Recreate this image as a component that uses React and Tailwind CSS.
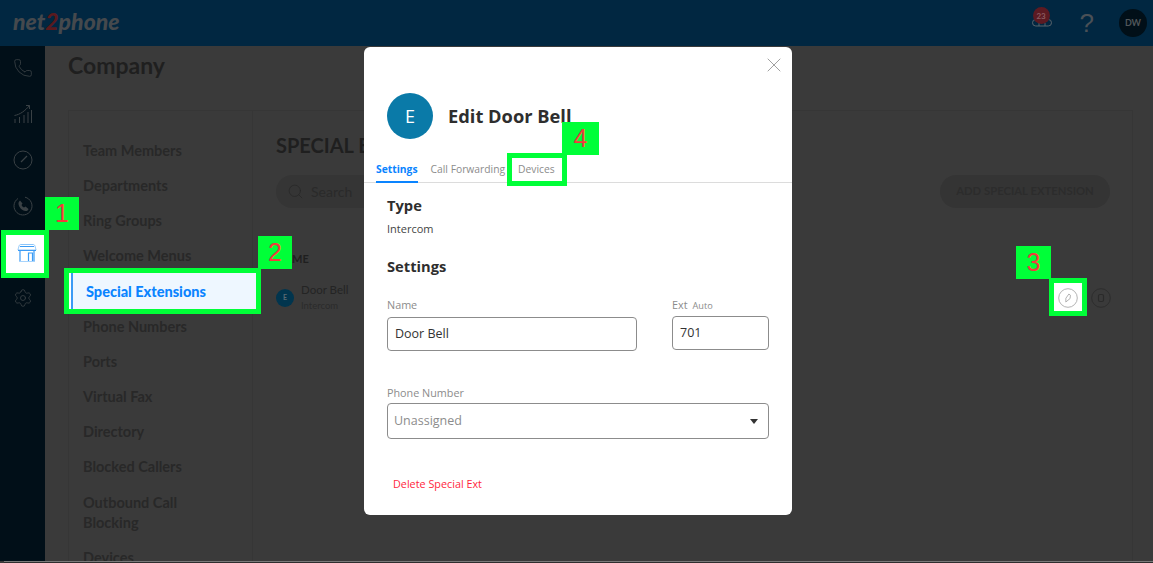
import React from 'react';
import { Phone, Settings, Search, X } from 'lucide-react';

const navItems = ['Team Members', 'Departments', 'Ring Groups', 'Welcome Menus'];
const navItemsBelow = ['Phone Numbers', 'Ports', 'Virtual Fax', 'Directory', 'Blocked Callers'];

const GrowthIcon = () => (
  <svg width="20" height="20" viewBox="0 0 20 20" fill="none" stroke="#3a4145" strokeWidth="1">
    <path d="M2 19v-4M6.500 19v-6M11 19v-8M15 19V8M18.500 19V6" />
    <path d="M1.500 11.500C7 10.500 12 7 16.500 1.500M13 1.500h3.500V5" />
  </svg>
);

const GaugeIcon = () => (
  <svg width="20" height="20" viewBox="0 0 20 20" fill="none" stroke="#3a4145" strokeWidth="1">
    <circle cx="10" cy="10" r="9" />
    <path d="M8 12l6-6" strokeWidth="1.300" />
  </svg>
);

const CallCircleIcon = () => (
  <svg width="20" height="20" viewBox="0 0 20 20" fill="none" stroke="#3a4145" strokeWidth="1">
    <path d="M5 2.500A9 9 0 1 0 12 1.200" />
    <path d="M7 4.500l2.500 3-1 1.500c.5 1.300 1.200 2 2.500 2.500l1.500-1 3 2.500c-.5 1.500-1.500 2.200-3 2-3.500-.5-6.500-3.500-7-7-.1-1.500.5-2.700 1.500-3.500z" fill="#3a4145" stroke="none" />
  </svg>
);

const StoreIcon = () => (
  <svg width="20" height="20" viewBox="0 0 20 20" fill="none" stroke="#3b9bf5" strokeWidth="1">
    <path d="M3.500 1.500h13c1 0 1.500 1 2.500 5.500H1c1-4.500 1.500-5.500 2.500-5.500z" stroke="#8cc6fb" />
    <path d="M1 7.500h18M3 3.500h14" />
    <path d="M3 8v10M17 8v10" strokeWidth="1.200" />
    <path d="M2 18.500h16" stroke="#a8d4fc" />
    <path d="M11.500 18V10h4v8" strokeWidth="1.200" />
  </svg>
);

const PencilCircle = () => (
  <svg width="20" height="20" viewBox="0 0 20 20" fill="none" stroke="#a0a0a0" strokeWidth="0.8">
    <circle cx="10" cy="10" r="9.300" />
    <path d="M7.800 14l.1-3.800 3-4.200 1.500 1.200-.3 3.300z" />
  </svg>
);

const TrashCircle = () => (
  <svg width="20" height="20" viewBox="0 0 20 20" fill="none" stroke="#2a2a2a" strokeWidth="0.8">
    <circle cx="10" cy="10" r="9.300" />
    <rect x="7.500" y="6.500" width="5" height="7" rx="1.500" strokeWidth="1.200" />
  </svg>
);

// Red number on a green square, placed next to each marked item
const Badge = ({ className, children }) => (
  <div className={`absolute flex items-center justify-center bg-[#00ff38] text-[#f23b3b] text-[25px] leading-none font-['Liberation_Sans',sans-serif] ${className}`}>
    {children}
  </div>
);

export default function App() {
  return (
    <div className="relative flex h-[563px] w-[1153px] flex-col overflow-hidden bg-[#3a3a3a] font-['Lato',sans-serif]">
      <header className="flex h-[46px] shrink-0 items-center justify-between bg-[#012741] pl-[13px] pr-[6px]">
        <span className="pb-[3px] text-[23px] font-black italic leading-none text-[#45494d]">
          net<span className="text-[#5a1a1e]">2</span>phone
        </span>
        <div className="flex items-center">
          <div className="relative mr-[28px] h-[22px] w-[20px]">
            <div className="absolute left-[1px] top-[-5px] z-10 flex h-[17px] w-[17px] items-center justify-center rounded-full bg-[#5c1a22] text-[8px] font-bold text-[#8a5a60]">23</div>
            <svg width="20" height="9" viewBox="0 0 20 9" fill="none" stroke="#59646c" strokeWidth="1" className="absolute bottom-[7px] left-0">
              <rect x="0.500" y="1.500" width="19" height="6.500" rx="3.250" />
              <path d="M7 8V5M13 8V5" />
            </svg>
          </div>
          <span className="mr-[25px] font-['Liberation_Sans',sans-serif] text-[26px] font-light leading-none text-[#4a5056]">?</span>
          <div className="flex h-[28px] w-[28px] items-center justify-center rounded-full bg-[#010f18] text-[9px] font-bold text-[#50565a]">DW</div>
        </div>
      </header>

      <div className="flex min-h-0 flex-1 overflow-hidden">
        <aside className="flex w-[45px] shrink-0 flex-col items-start gap-[26px] bg-[#010f18] pl-[13px] pt-[12px]">
          <Phone size={20} strokeWidth={1} className="text-[#3a4145]" />
          <GrowthIcon />
          <GaugeIcon />
          <CallCircleIcon />
          <div className="relative h-5 w-5">
            <div className="absolute left-[-12px] top-[-12px] flex h-[48px] w-[48px] items-center justify-center border-[5px] border-[#00ff38] bg-white pb-[3px] pl-[3px]">
              <StoreIcon />
            </div>
          </div>
          <Settings size={20} strokeWidth={1} className="text-[#3a4145]" />
        </aside>

        <main className="min-w-0 flex-1 pl-[23px] pr-[20px] pt-[6px]">
          <h1 className="text-[23px] font-bold leading-[27px] text-[#1f1f1f]">Company</h1>
          <div className="mt-[31px] flex h-[600px] border border-[#363636]">
            <nav className="w-[184px] shrink-0 border-r border-[#363636] pl-[14px] pt-[31px] text-[14.500px] font-bold leading-[17px] text-[#282828]">
              {navItems.map((item) => (
                <div key={item} className="mb-[18px]">{item}</div>
              ))}
              <div className="relative mb-[19px] h-[17px]">
                <div className="absolute left-[-19px] top-[-14px] flex h-[46px] w-[197px] items-center border-[5px] border-[#00ff38] bg-white">
                  <div className="ml-[2px] flex h-[36px] w-[185px] items-center border-l-2 border-[#3b9bf5] bg-[#eef7ff] pl-[13px] font-black text-[#0a84ff]">
                    Special Extensions
                  </div>
                </div>
              </div>
              {navItemsBelow.map((item) => (
                <div key={item} className="mb-[18px]">{item}</div>
              ))}
              <div className="mb-[16px] leading-[20px]">Outbound Call<br />Blocking</div>
              <div>Devices</div>
            </nav>

            <section className="min-w-0 flex-1 pl-[23px] pr-[21px] pt-[22px]">
              <h2 className="text-[20px] font-bold leading-[24px] text-[#1f1f1f]">SPECIAL EXTENSIONS</h2>
              <div className="mt-[18px] flex items-center justify-between">
                <div className="flex h-[33px] w-[260px] items-center gap-[7px] rounded-full bg-[#353535] pl-[11px] text-[14px] text-[#2a2a2a]">
                  <Search size={17} strokeWidth={1} className="text-[#262626]" />
                  Search
                </div>
                <div className="mr-[1px] flex h-[33px] w-[170px] items-center justify-center rounded-full bg-[#343434] text-[11.300px] font-bold text-[#2c2c2c]">
                  ADD SPECIAL EXTENSION
                </div>
              </div>
              <div className="mt-[44px] text-[11px] font-bold leading-[14px] text-[#1f1f1f]">NAME</div>
              <div className="mt-[17px] flex items-center">
                <div className="flex h-[18px] w-[18px] items-center justify-center rounded-full bg-[#01354e] text-[7px] font-bold text-[#5a6a72]">E</div>
                <div className="ml-[7px] text-[#242424]">
                  <div className="text-[11.500px] leading-[14px]">Door Bell</div>
                  <div className="mt-[3px] text-[9.500px] leading-[12px] text-[#2b2b2b]">Intercom</div>
                </div>
                <div className="ml-auto flex items-center gap-[13px]">
                  <div className="relative h-5 w-5">
                    <div className="absolute bottom-[-8px] left-[-9px] right-[-9px] top-[-10px] flex items-center justify-center border-[5px] border-[#00ff38] bg-white pt-[2px]">
                      <PencilCircle />
                    </div>
                  </div>
                  <TrashCircle />
                </div>
              </div>
            </section>
          </div>
        </main>
      </div>
      <div className="ml-[4px] h-[2px] shrink-0 border-t border-[#7a7a7a] bg-[#2e2e2e]" />

      <Badge className="left-[45px] top-[197px] h-[33px] w-[34px]">1</Badge>
      <Badge className="left-[258px] top-[236px] h-[33px] w-[34px]">2</Badge>
      <Badge className="left-[1016px] top-[246px] h-[33px] w-[35px]">3</Badge>

      {/* edit dialog */}
      <div className="absolute left-[364px] top-[47px] h-[468px] w-[428px] rounded-[6px] bg-white font-['Open_Sans',sans-serif]">
        <X size={24} strokeWidth={1} className="absolute right-[6px] top-[6px] text-[#a0a0a0]" />
        <div className="flex items-center pl-[23px] pt-[46px]">
          <div className="flex h-[46px] w-[46px] items-center justify-center rounded-full bg-[#0a7aa8] text-[18px] text-white">E</div>
          <h3 className="ml-[15px] text-[18.300px] font-bold leading-none text-[#2e2e2e]">Edit Door Bell</h3>
        </div>
        <div className="mt-[17px] flex h-[27px] items-start border-b border-[#dcdcdc] pl-[12px] text-[10.300px] leading-[14px]">
          <div className="mr-[13px] h-[27px] border-b-2 border-[#0a84ff] pt-[6px] font-bold text-[#0a84ff]">Settings</div>
          <div className="mr-[13px] pt-[6px] text-[#8c8c8c]">Call Forwarding</div>
          <div className="relative pt-[6px] text-[#8c8c8c]">
            Devices
            <div className="absolute left-[-11px] top-[-3px] h-[33px] w-[60px] border-[5px] border-[#00ff38]" />
          </div>
        </div>
        <div className="px-[23px]">
          <h4 className="mt-[12px] text-[14.700px] font-bold leading-[20px] text-[#2e2e2e]">Type</h4>
          <p className="mt-[6px] text-[11px] leading-[15px] text-[#444]">Intercom</p>
          <h4 className="mt-[20px] text-[14.700px] font-bold leading-[20px] text-[#2e2e2e]">Settings</h4>
          <div className="mt-[21px] flex justify-between">
            <div className="w-[250px]">
              <div className="text-[10.800px] leading-[15px] text-[#8c8c8c]">Name</div>
              <div className="mt-[5px] flex h-[34px] items-center rounded-[4px] border border-[#8c8c8c] pl-[7px] text-[12.500px] text-[#333]">Door Bell</div>
            </div>
            <div className="w-[97px]">
              <div className="flex items-baseline gap-[5px] leading-[15px] text-[#8c8c8c]">
                <span className="text-[10.800px]">Ext</span>
                <span className="text-[9.200px]">Auto</span>
              </div>
              <div className="mt-[3px] flex h-[34px] items-center rounded-[4px] border border-[#8c8c8c] pl-[7px] text-[12.500px] text-[#333]">701</div>
            </div>
          </div>
          <div className="mt-[34px] text-[10.800px] leading-[15px] text-[#8c8c8c]">Phone Number</div>
          <div className="mt-[3px] flex h-[36px] items-center justify-between rounded-[4px] border border-[#8c8c8c] pl-[6px] pr-[10px] text-[12.500px] text-[#8c8c8c]">
            Unassigned
            <span className="h-0 w-0 border-x-[4px] border-t-[5px] border-x-transparent border-t-[#333]" />
          </div>
          <p className="ml-[6px] mt-[37px] text-[10.800px] leading-[15px] text-[#ff1f40]">Delete Special Ext</p>
        </div>
      </div>

      <Badge className="left-[562px] top-[122px] h-[33px] w-[37px]">4</Badge>
    </div>
  );
}
